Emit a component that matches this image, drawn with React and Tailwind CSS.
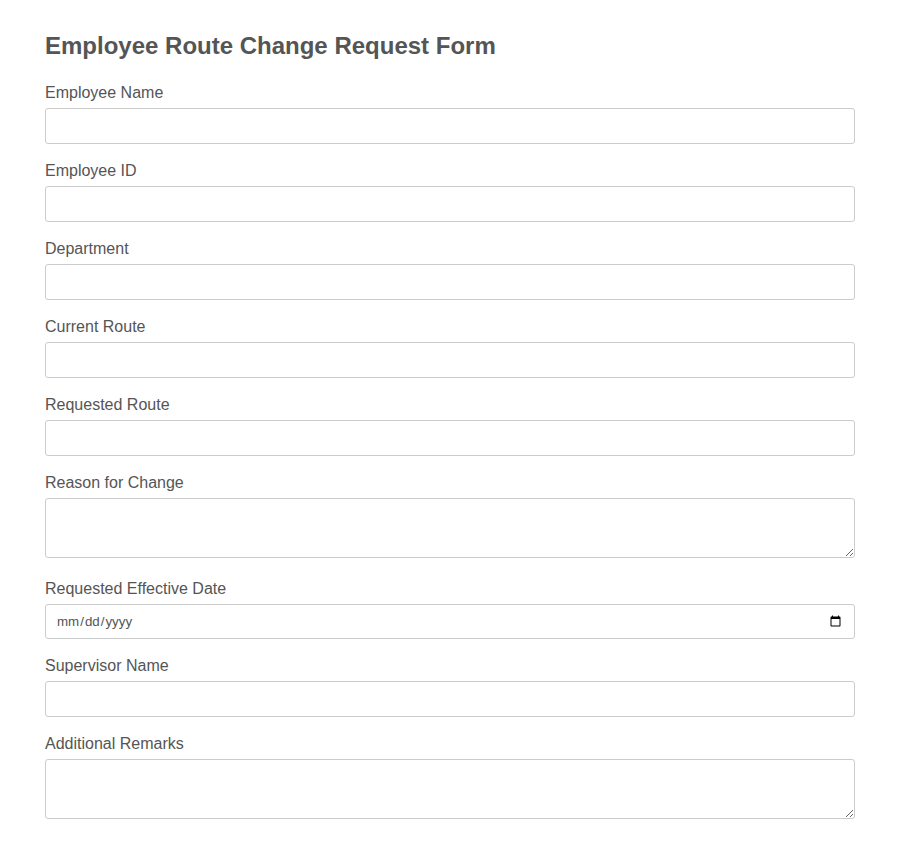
import React from 'react';

const fields = [
  { label: 'Employee Name', type: 'text' },
  { label: 'Employee ID', type: 'text' },
  { label: 'Department', type: 'text' },
  { label: 'Current Route', type: 'text' },
  { label: 'Requested Route', type: 'text' },
  { label: 'Reason for Change', type: 'textarea' },
  { label: 'Requested Effective Date', type: 'date' },
  { label: 'Supervisor Name', type: 'text' },
  { label: 'Additional Remarks', type: 'textarea' },
];

const App = () => {
  return (
    <div className="min-h-screen bg-white px-[45px] pt-[32px] pb-[20px] text-[#555] font-['Liberation_Sans',Arial,sans-serif]">
      <h2 className="text-[24px] leading-[28px] font-bold mb-[23px]">Employee Route Change Request Form</h2>
      <form>
        {fields.map((f) => (
          <div key={f.label} className={f.type === 'textarea' ? 'mb-[21px]' : 'mb-[17px]'}>
            <label className="block text-[16px] leading-[18px] pt-[1px] mb-[6px]">{f.label}</label>
            {f.type === 'textarea' ? (
              <textarea className="block w-full h-[60px] border border-[#ccc] rounded-[3px] px-[10px] py-[8px] text-[16px] outline-none" />
            ) : f.type === 'date' ? (
              <input
                type="date"
                className="block w-full h-[35px] border border-[#ccc] rounded-[3px] px-[10px] text-[13.33px] text-[#555] outline-none"
              />
            ) : (
              <input
                type="text"
                className="block w-full h-[36px] border border-[#ccc] rounded-[3px] px-[10px] text-[16px] outline-none"
              />
            )}
          </div>
        ))}
      </form>
    </div>
  );
};

export default App;
